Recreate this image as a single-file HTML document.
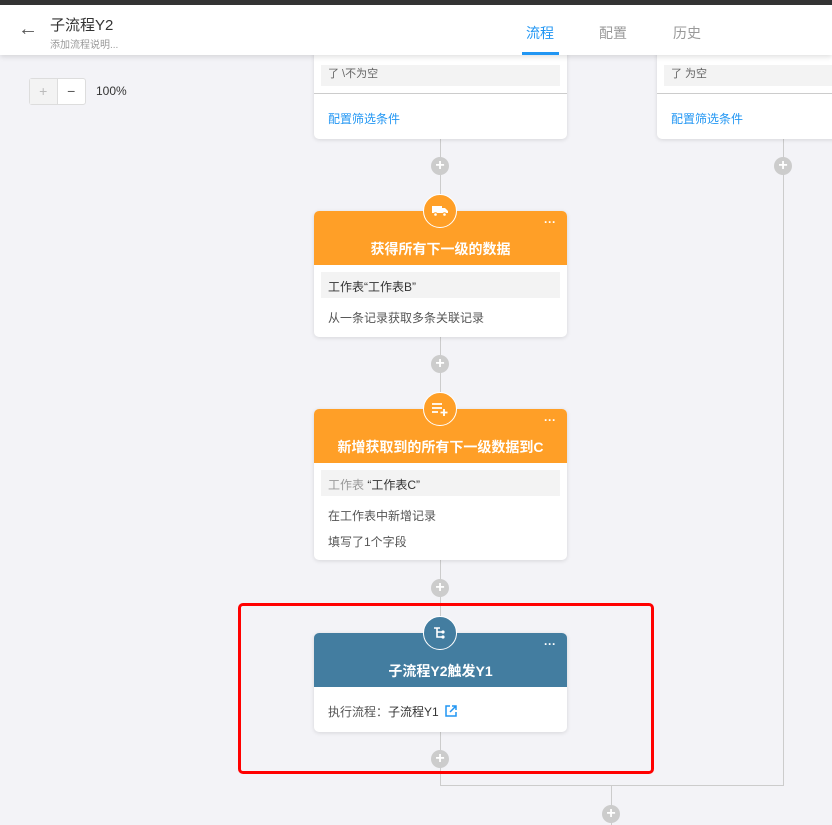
<!DOCTYPE html>
<html><head><meta charset="utf-8"><style>
*{box-sizing:border-box;margin:0;padding:0}
body{width:832px;height:825px;overflow:hidden;background:#f3f3f7;font-family:"Liberation Sans","Noto Sans CJK SC",sans-serif;position:relative}
.topbar{position:absolute;left:0;top:0;width:832px;height:5px;background:#333;z-index:6}
.header{position:absolute;left:0;top:5px;width:832px;height:50px;background:#fff;box-shadow:0 2px 5px rgba(0,0,0,.12);z-index:5}
.abs{position:absolute}
.card{position:absolute;left:314px;width:253px;background:#fff;border-radius:5px;box-shadow:0 1px 4px rgba(0,0,0,.12)}
.hd{height:54px;border-radius:5px 5px 0 0;color:#fff;font-size:14px;font-weight:bold;text-align:center;padding-top:28px;position:relative}
.dots{position:absolute;right:11px;top:6px;font-size:12px;letter-spacing:0;line-height:10px}
.gray{margin:7px 7px 0;background:#f3f3f3;height:26px;font-size:12px;color:#333;padding:6px 7px}
.t{font-size:12px;color:#555;padding-left:14px}
.circ{position:absolute;width:34px;height:34px;border-radius:50%;border:1.5px solid #fff;left:423px;z-index:2;display:flex;align-items:center;justify-content:center}
.vl{position:absolute;width:1px;background:#ccc}
.plus{position:absolute;width:18px;height:18px;border-radius:50%;background:#ccc;color:#fff;font-size:16px;line-height:18px;text-align:center;font-weight:bold}
</style></head><body>
<div class="topbar"></div>
<div class="header">
 <div class="abs" style="left:18px;top:13px;font-size:20px;color:#555">&#8592;</div>
 <div class="abs" style="left:50px;top:9px;font-size:15px;color:#333">子流程Y2</div>
 <div class="abs" style="left:50px;top:31px;font-size:10px;color:#999">添加流程说明...</div>
 <div class="abs" style="left:526px;top:18px;font-size:14px;color:#2196f3">流程</div>
 <div class="abs" style="left:522px;top:47px;width:37px;height:3px;background:#2196f3"></div>
 <div class="abs" style="left:599px;top:18px;font-size:14px;color:#999">配置</div>
 <div class="abs" style="left:673px;top:18px;font-size:14px;color:#999">历史</div>
</div>
<!-- zoom -->
<div class="abs" style="left:29px;top:78px;width:57px;height:27px;border:1px solid #ddd;border-radius:3px;background:#fff;display:flex">
 <div style="width:28px;background:#f3f3f3;color:#bbb;text-align:center;line-height:25px;font-size:14px;border-right:1px solid #ddd">+</div>
 <div style="width:28px;color:#555;text-align:center;line-height:25px;font-size:14px">−</div>
</div>
<div class="abs" style="left:96px;top:84px;font-size:12px;color:#333">100%</div>

<!-- lines -->
<div class="vl" style="left:440px;top:139px;height:646px"></div>
<div class="vl" style="left:783px;top:139px;height:646px"></div>
<div class="abs" style="left:440px;top:785px;width:344px;height:1px;background:#ccc"></div>
<div class="vl" style="left:611px;top:785px;height:40px"></div>

<!-- top cards -->
<div class="card" style="top:40px;height:99px;border-radius:0 0 5px 5px">
 <div class="gray" style="margin-top:25px;height:21px;padding:0 7px;color:#666;font-size:11px">了 \不为空</div>
 <div style="border-top:1px solid #ccc;margin-top:7px"></div>
 <div style="font-size:12px;color:#2196f3;padding:16px 14px">配置筛选条件</div>
</div>
<div class="card" style="left:657px;top:40px;height:99px;width:200px;border-radius:0 0 0 5px">
 <div class="gray" style="margin-top:25px;height:21px;padding:0 7px;color:#666;font-size:11px">了 为空</div>
 <div style="border-top:1px solid #ccc;margin-top:7px"></div>
 <div style="font-size:12px;color:#2196f3;padding:16px 14px">配置筛选条件</div>
</div>

<div class="plus" style="left:431px;top:157px">+</div>
<div class="plus" style="left:774px;top:157px">+</div>

<!-- card 2 -->
<div class="circ" style="top:194px;background:#ff9f27"><svg width="16" height="12" viewBox="0 0 16 12"><rect x="0" y="1" width="10" height="7" fill="#fff"/><path d="M10 3h3l3 3v2h-6z" fill="#fff"/><circle cx="3.5" cy="9.5" r="1.8" fill="#fff" stroke="#ff9f27"/><circle cx="12.5" cy="9.5" r="1.8" fill="#fff" stroke="#ff9f27"/></svg></div>
<div class="card" style="top:211px;height:126px">
 <div class="hd" style="background:#ff9f27">获得所有下一级的数据<span class="dots">···</span></div>
 <div class="gray">工作表“工作表B”</div>
 <div class="t" style="margin-top:11px">从一条记录获取多条关联记录</div>
</div>
<div class="plus" style="left:431px;top:355px">+</div>

<!-- card 3 -->
<div class="circ" style="top:392px;background:#ff9f27"><svg width="18" height="14" viewBox="0 0 18 14"><path d="M1 2h10M1 6h10M1 10h6M13 7v7M9.5 10.5h7" stroke="#fff" stroke-width="1.8"/></svg></div>
<div class="card" style="top:409px;height:151px">
 <div class="hd" style="background:#ff9f27">新增获取到的所有下一级数据到C<span class="dots">···</span></div>
 <div class="gray"><span style="color:#999">工作表</span> “工作表C”</div>
 <div class="t" style="margin-top:11px">在工作表中新增记录</div>
 <div class="t" style="margin-top:9px">填写了1个字段</div>
</div>
<div class="plus" style="left:431px;top:579px">+</div>

<!-- red box -->
<div class="abs" style="left:238px;top:603px;width:416px;height:171px;border:3px solid #f00;border-radius:5px;z-index:3"></div>

<!-- card 4 -->
<div class="circ" style="top:616px;background:#437da0"><svg width="14" height="14" viewBox="0 0 14 14"><path d="M1 2h6M4 2v9h6M4 6h6" stroke="#fff" stroke-width="1.6" fill="none"/><circle cx="10" cy="6" r="1.6" fill="#fff"/><circle cx="10" cy="11" r="1.6" fill="#fff"/></svg></div>
<div class="card" style="top:633px;height:99px">
 <div class="hd" style="background:#437da0">子流程Y2触发Y1<span class="dots">···</span></div>
 <div class="t" style="margin-top:16px">执行流程：<span style="color:#333">子流程Y1</span> <svg width="12" height="12" viewBox="0 0 12 12" style="vertical-align:-1px;margin-left:3px"><path d="M5 1H1v10h10V7M7 1h4v4M11 1L5 7" stroke="#2196f3" stroke-width="1.5" fill="none"/></svg></div>
</div>
<div class="plus" style="left:431px;top:750px">+</div>
<div class="plus" style="left:602px;top:805px">+</div>
</body></html>
